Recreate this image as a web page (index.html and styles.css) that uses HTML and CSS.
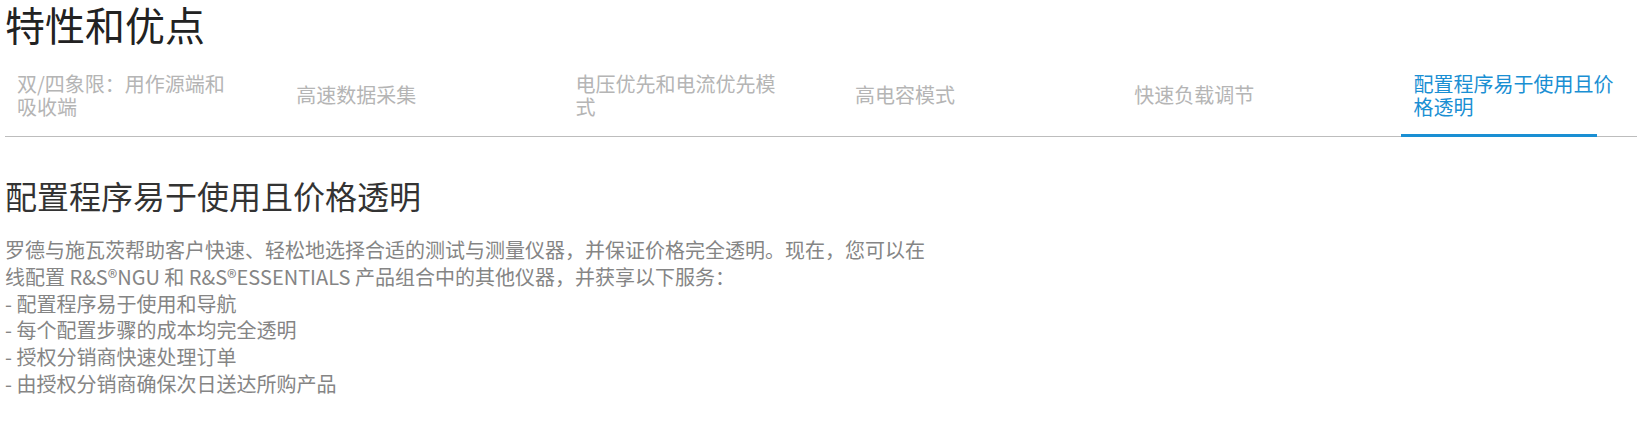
FILE: index.html
```html
<!DOCTYPE html>
<html lang="zh-CN">
<head>
  <meta charset="UTF-8" />
  <meta name="viewport" content="width=device-width, initial-scale=1.0"/>
  <title>特性和优点</title>
  <link rel="stylesheet" href="styles.css">
</head>
<body>
  <div class="page">
    <h1 class="page-title">特性和优点</h1>

    <ul class="tabs">
      <li class="tab"><span class="tab-label">双/四象限：用作源端和吸收端</span></li>
      <li class="tab"><span class="tab-label">高速数据采集</span></li>
      <li class="tab"><span class="tab-label">电压优先和电流优先模式</span></li>
      <li class="tab"><span class="tab-label">高电容模式</span></li>
      <li class="tab"><span class="tab-label">快速负载调节</span></li>
      <li class="tab active"><span class="tab-label">配置程序易于使用且价格透明</span></li>
    </ul>

    <section class="feature">
      <h2>配置程序易于使用且价格透明</h2>
      <p>罗德与施瓦茨帮助客户快速、轻松地选择合适的测试与测量仪器，并保证价格完全透明。现在，您可以在线配置 R&amp;S®NGU 和 R&amp;S®ESSENTIALS 产品组合中的其他仪器，并获享以下服务：<br>
      - 配置程序易于使用和导航<br>
      - 每个配置步骤的成本均完全透明<br>
      - 授权分销商快速处理订单<br>
      - 由授权分销商确保次日送达所购产品</p>
    </section>
  </div>
</body>
</html>
```

FILE: styles.css
```css
:root {
  --title-color: #222;
  --text-color: #858585;
  --muted-color: #b5b5b5;
  --accent-color: #1a8fd3;
  --line-color: #bdbdbd;
}
* { box-sizing: border-box; }
body {
  margin: 0;
  background: #fff;
  font-family: "Noto Sans CJK SC", "Noto Sans", sans-serif;
  color: var(--text-color);
}
.page {
  padding: 0 7px 0 5px;
  overflow: hidden;
}
.page-title {
  margin: 0;
  font-size: 40px;
  line-height: 48px;
  font-weight: 400;
  color: var(--title-color);
}

/* tab strip */
.tabs {
  list-style: none;
  margin: 0;
  padding: 5px 0 0;
  height: 89px;
  display: flex;
  border-bottom: 1px solid var(--line-color);
}
.tab {
  flex: 0 0 279.3px;
  position: relative;
  display: flex;
  align-items: center;
  padding: 0 12px;
}
.tab-label {
  width: 215px;
  font-size: 20px;
  line-height: 23px;
  color: var(--muted-color);
}
.tab.active .tab-label { color: var(--accent-color); }
.tab.active::after {
  content: "";
  position: absolute;
  left: 0;
  bottom: -1px;
  width: 196px;
  height: 3px;
  background: var(--accent-color);
}

/* feature text */
.feature { margin-top: 38px; }
.feature h2 {
  margin: 0;
  font-size: 32px;
  line-height: 40px;
  font-weight: 400;
  color: #333;
}
.feature p {
  margin: 22px 0 0;
  max-width: 936px;
  font-size: 20px;
  line-height: 26.8px;
}
```
